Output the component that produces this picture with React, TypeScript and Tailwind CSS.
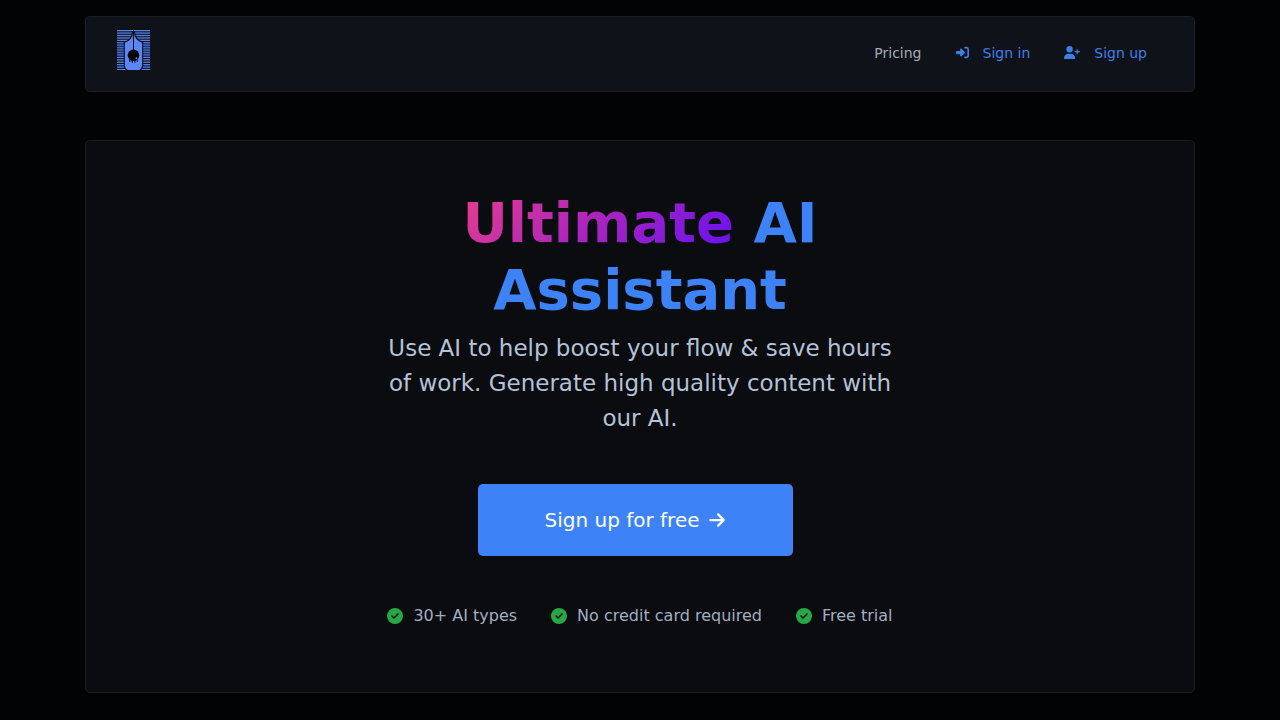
import { FaArrowRight, FaCircleCheck, FaRightToBracket, FaUserPlus } from "react-icons/fa6";

const perks = ["30+ AI types", "No credit card required", "Free trial"];

const lineRows = Array.from({ length: 17 }, (_, i) => i);

function Logo() {
  return (
    <svg viewBox="0 0 33 40" className="h-10 w-[33px]" aria-hidden="true">
      <g fill="#587fe8">
        {lineRows.map((i) => (
          <rect key={i} x="0" y={i * 2.43} width="33" height="1.3" />
        ))}
      </g>
      <g fill="#31509f" opacity="0.5">
        <rect x="0" y="14" width="7" height="12" />
        <rect x="26" y="14" width="7" height="12" />
      </g>
      <path
        d="M15.600 1.500C15.400 7 12.500 10.800 7.300 12.500V35.500C7.300 38 8.700 39.500 10.500 40.500H22.500C24.300 39.500 25.700 38 25.700 35.500V12.500C20.500 10.800 17.600 7 17.400 1.500Z"
        fill="#5c86f2"
        stroke="#0b1020"
        strokeWidth="1.1"
      />
      <path d="M16.500 0V21" stroke="#05070c" strokeWidth="1" />
      <circle cx="16.500" cy="25.300" r="5.800" fill="#020305" />
      <path
        d="M12.800 29.500v2.500M15.300 30.500v2.200M17.800 30.500v2.200M20.300 29.500v2.500"
        stroke="#020305"
        strokeWidth="1"
      />
      <circle cx="19.400" cy="28.200" r="0.9" fill="#5c86f2" />
    </svg>
  );
}

export default function App() {
  return (
    <div className="min-h-screen bg-[#020304] px-4 py-4 font-['DejaVu_Sans',sans-serif]">
      <div className="mx-auto flex max-w-[1110px] flex-col gap-12">
        <header className="flex items-start justify-between rounded-[5px] border border-[#1b1f24] bg-[#0f1219] px-[31px] pt-[13px] pb-[21px]">
          <a href="#home" aria-label="Home">
            <Logo />
          </a>
          <nav className="flex items-center gap-[34px] pt-[11px] pr-4 text-[14px] leading-6 text-[#3d7fe8]">
            <a href="#pricing" className="text-[#a3abb8]">
              Pricing
            </a>
            <a href="#sign-in" className="flex items-center gap-[14px]">
              <FaRightToBracket className="mb-0.5 h-[13px] w-[13px]" />
              Sign in
            </a>
            <a href="#sign-up" className="flex items-center gap-[14px]">
              <FaUserPlus className="mb-0.5 h-[13px] w-4" />
              Sign up
            </a>
          </nav>
        </header>

        <main className="flex flex-col items-center rounded-[5px] border border-[#1b1f24] bg-[#0a0c10] px-4 pt-12 pb-16 text-center">
          <h1 className="max-w-[540px] text-[56px] leading-[67px] font-bold text-[#3d83f7]">
            <span className="bg-[linear-gradient(135deg,#e83e8c,#a824c0_50%,#6610f2)] bg-clip-text text-transparent">
              Ultimate
            </span>{" "}
            AI
            <br />
            Assistant
          </h1>
          <p className="mt-2 max-w-[525px] text-[23px] leading-[35px] text-[#b4c2d8]">
            Use AI to help boost your flow &amp; save hours of work. Generate high quality content with our AI.
          </p>
          <a
            href="#sign-up"
            className="mt-12 mr-2.5 flex h-[72px] items-center gap-2 rounded-[5px] bg-[#3d83f7] px-[67px] text-[20px] text-white"
          >
            Sign up for free
            <FaArrowRight className="size-[18px]" />
          </a>
          <ul className="mt-12 flex flex-wrap justify-center gap-x-[34px] gap-y-2 text-[16px] leading-6 text-[#a3aec0]">
            {perks.map((perk) => (
              <li key={perk} className="flex items-center gap-[10px]">
                <FaCircleCheck className="size-4 text-[#28a745]" />
                {perk}
              </li>
            ))}
          </ul>
        </main>
      </div>
    </div>
  );
}
